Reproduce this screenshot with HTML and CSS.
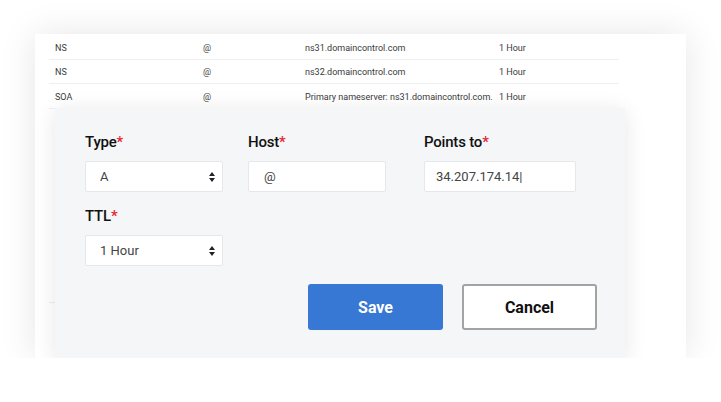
FILE: index.html
```html
<!DOCTYPE html>
<html lang="en">
<head>
    <meta charset="UTF-8">
    <meta name="viewport" content="width=device-width, initial-scale=1.0">
    <title>DNS Records</title>
    <link rel="stylesheet" href="styles.css">
</head>
<body>
    <div class="card">
        <table class="records">
            <tr>
                <td class="col-type">NS</td>
                <td class="col-host">@</td>
                <td class="col-value">ns31.domaincontrol.com</td>
                <td class="col-ttl">1 Hour</td>
            </tr>
            <tr>
                <td>NS</td>
                <td>@</td>
                <td>ns32.domaincontrol.com</td>
                <td>1 Hour</td>
            </tr>
            <tr>
                <td>SOA</td>
                <td>@</td>
                <td>Primary nameserver: ns31.domaincontrol.com.</td>
                <td>1 Hour</td>
            </tr>
            <tr class="edit-row">
                <td colspan="4"></td>
            </tr>
        </table>

        <form class="edit-panel">
            <div class="fields">
                <div class="field">
                    <label>Type<span class="req">*</span></label>
                    <div class="select-wrap">
                        <select>
                            <option>A</option>
                        </select>
                        <svg class="arrows" width="6" height="10" viewBox="0 0 6 10">
                            <path d="M3 0 L6 4 L0 4 Z M0 6 L6 6 L3 10 Z" fill="#222"/>
                        </svg>
                    </div>
                </div>
                <div class="field">
                    <label>Host<span class="req">*</span></label>
                    <input type="text" value="@">
                </div>
                <div class="field field-wide">
                    <label>Points to<span class="req">*</span></label>
                    <input type="text" value="34.207.174.14|">
                </div>
                <div class="field">
                    <label>TTL<span class="req">*</span></label>
                    <div class="select-wrap">
                        <select>
                            <option>1 Hour</option>
                        </select>
                        <svg class="arrows" width="6" height="10" viewBox="0 0 6 10">
                            <path d="M3 0 L6 4 L0 4 Z M0 6 L6 6 L3 10 Z" fill="#222"/>
                        </svg>
                    </div>
                </div>
            </div>
            <div class="actions">
                <button type="button" class="btn btn-save">Save</button>
                <button type="button" class="btn btn-cancel">Cancel</button>
            </div>
        </form>
    </div>
</body>
</html>
```

FILE: styles.css
```css
body {
    font-family: Roboto, "Liberation Sans", sans-serif;
    margin: 0;
    padding: 34px 0 0 35px;
    background: #ffffff;
}

.card {
    position: relative;
    width: 651px;
    height: 324px;
    padding: 1px 14px 0;
    box-sizing: border-box;
    background: #ffffff;
    box-shadow: 0 0 34px rgba(0, 0, 0, 0.1);
}

.records {
    width: 570px;
    border-collapse: collapse;
    font-size: 9px;
    color: #3a3a3a;
}

.records td {
    height: 21.5px;
    padding: 2px 0 0 6px;
    border-bottom: 1.5px solid #efefef;
    white-space: nowrap;
}

.col-type {
    width: 142px;
}

.col-host {
    width: 96px;
}

.col-value {
    width: 188px;
}

.records .edit-row td {
    height: 191px;
}

.edit-panel {
    position: absolute;
    left: 20px;
    top: 74px;
    width: 570px;
    height: 251px;
    box-sizing: border-box;
    margin: 0;
    padding: 25px 28px 0 30px;
    background: #f5f6f8;
    box-shadow: 0 3px 20px rgba(0, 0, 0, 0.1);
}

.fields {
    display: grid;
    grid-template-columns: 163px 176px 152px;
    row-gap: 15px;
}

.field {
    display: flex;
    flex-direction: column;
}

.field label {
    font-size: 15px;
    line-height: 18px;
    font-weight: 500;
    color: #111;
    letter-spacing: -0.2px;
    margin-bottom: 10px;
}

.req {
    color: #e8242e;
}

.field input,
.field select {
    width: 138px;
    height: 31px;
    box-sizing: border-box;
    border: 1px solid #e6e7ea;
    border-radius: 2px;
    background: #ffffff;
    font-family: Roboto, "Liberation Sans", sans-serif;
    font-size: 13px;
    color: #444;
    padding: 0 0 0 14px;
    outline: none;
}

.field-wide input {
    width: 152px;
    padding-left: 11px;
}

.field input[value="@"] {
    padding-left: 15px;
}

.field select {
    appearance: none;
    -webkit-appearance: none;
}

.select-wrap {
    position: relative;
    width: 138px;
}

.arrows {
    position: absolute;
    right: 8px;
    top: 11px;
}

.actions {
    display: flex;
    justify-content: flex-end;
    gap: 19px;
    margin-top: 18px;
}

.btn {
    width: 135px;
    height: 46px;
    font-family: Roboto, "Liberation Sans", sans-serif;
    font-size: 16px;
    font-weight: 700;
    border-radius: 3px;
    cursor: pointer;
}

.btn-save {
    background: #3778d4;
    color: #ffffff;
    border: none;
}

.btn-cancel {
    background: #ffffff;
    color: #111;
    border: 2px solid #a3a3a3;
}
```
